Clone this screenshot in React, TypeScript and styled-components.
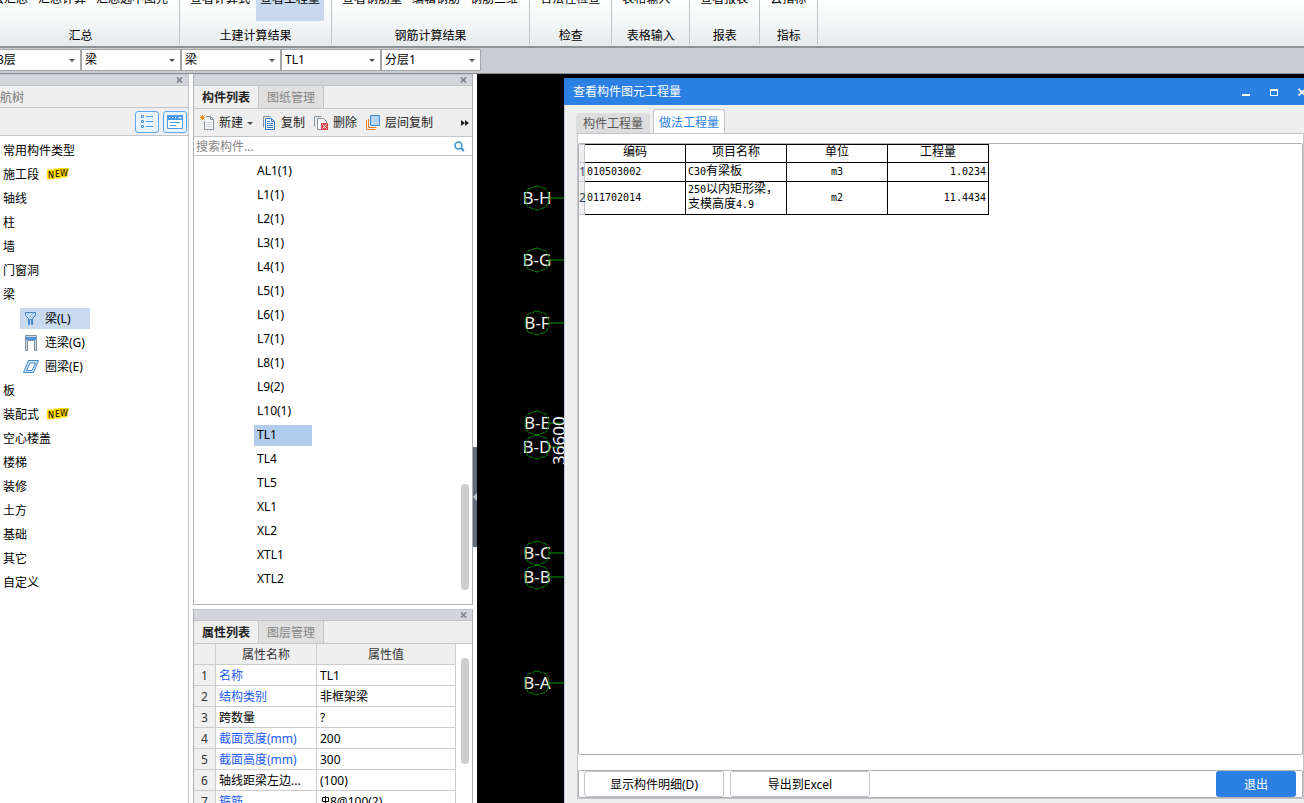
import React from "react";
import styled, { createGlobalStyle, css } from "styled-components";

const GlobalStyle = createGlobalStyle`
  *, *::before, *::after { box-sizing: border-box; }
  body {
    margin: 0;
    overflow: hidden;
    background: #fff;
    color: #000;
    font: 12px/16px "Noto Sans", "Noto Sans CJK SC", sans-serif;
  }
  button, input, select {
    margin: 0;
    padding: 0;
    border: 0;
    border-radius: 0;
    background: none;
    color: inherit;
    font: inherit;
  }
  svg { display: block; flex: none; }
`;

const Window = styled.div`
  display: flex;
  flex-direction: column;
  height: 100vh;
  overflow: hidden;
`;

/* Ribbon */

const Ribbon = styled.header`
  display: flex;
  flex: none;
  height: 48px;
  padding-bottom: 2px;
  overflow: hidden;
  background: linear-gradient(#fdfefe, #f4f7f7 50%, #e5eaea);
  border-bottom: 2px solid #8d9294;
`;

const RibbonGroup = styled.section<{ $clipped?: boolean }>`
  display: flex;
  flex: none;
  flex-direction: column;
  justify-content: flex-end;
  margin-left: ${(p) => (p.$clipped ? "-18px" : "0")};
  border-right: 1px solid #bfc3c5;
`;

const RibbonButtons = styled.div<{ $wide?: boolean }>`
  display: flex;
  flex: none;
  gap: 2px;
  padding: 0 ${(p) => (p.$wide ? "15px" : "7px")} 0 6px;
`;

const RibbonButton = styled.button<{ $active?: boolean }>`
  display: flex;
  align-items: flex-end;
  height: 80px;
  padding: 0 4px 14px;
  white-space: nowrap;
  background: ${(p) => (p.$active ? "#c8d8ef" : "transparent")};
`;

const RibbonLabel = styled.div`
  flex: none;
  padding-top: 7px;
  text-align: center;
`;

/* Filter bar */

const FilterBar = styled.div`
  display: flex;
  flex: none;
  height: 26px;
  padding: 1px 0 2px;
  background: #c9ccd1;
  border-bottom: 1px solid #8d9094;
`;

const FilterBox = styled.div<{ $clipped?: boolean }>`
  display: grid;
  flex: none;
  width: 100px;
  margin-left: ${(p) => (p.$clipped ? "-19px" : "0")};
  align-items: center;
  background: #fff;
  border: 1px solid #a6a6a8;

  > * { grid-area: 1 / 1; }
  > svg { justify-self: end; margin-right: 5px; pointer-events: none; }
`;

const FilterSelect = styled.select`
  width: 100%;
  height: 20px;
  padding-left: 3px;
  appearance: none;
  outline: none;
`;

/* Work area */

const Workspace = styled.main`
  display: flex;
  flex: 1;
  min-height: 0;
`;

const NavPanel = styled.aside`
  display: flex;
  flex: none;
  flex-direction: column;
  width: 189px;
  border-right: 1px solid #c1c3c9;
`;

const DockStrip = styled.div`
  display: flex;
  flex: none;
  align-items: center;
  justify-content: flex-end;
  height: 12px;
  padding-right: 5px;
  background: #d4d5db;
  border: solid #c1c4ca;
  border-width: 1px 0;
`;

const IconButton = styled.button`
  display: flex;
  align-items: center;
  justify-content: center;
`;

const NavTitle = styled.h2`
  flex: none;
  height: 22px;
  margin: 0 0 0 -12px;
  padding-top: 4px;
  font-size: 12px;
  font-weight: 400;
  color: #777;
  background: #efefef;
  border-bottom: 1px solid #c1c3c9;
`;

const NavTools = styled.div`
  display: flex;
  flex: none;
  justify-content: flex-end;
  gap: 4px;
  height: 28px;
  padding: 3px 1px 2px;
  background: #efefef;
  border-bottom: 1px solid #c1c3c9;
`;

const ViewToggle = styled(IconButton)`
  width: 24px;
  background: #e9f3fd;
  border: 1px solid #5ba6ef;
  border-radius: 3px;
`;

const NavTree = styled.ul`
  margin: 0;
  padding: 2px 0 0;
  list-style: none;
`;

const NavItem = styled.li<{ $child?: boolean }>`
  display: flex;
  align-items: center;
  height: 24px;
  padding-left: ${(p) => (p.$child ? "20px" : "3px")};
  gap: 7px;
`;

const NavNode = styled.button`
  padding-top: 2px;
`;

const NavLeaf = styled.button<{ $selected?: boolean }>`
  display: flex;
  align-items: center;
  gap: 6px;
  height: 21px;
  min-width: 70px;
  padding: 1px 4px 0 3px;
  background: ${(p) => (p.$selected ? "#c8d9f0" : "transparent")};
`;

const DockColumn = styled.div`
  display: flex;
  flex: none;
  flex-direction: column;
  gap: 4px;
  width: 280px;
  margin-left: 4px;
`;

const DockPanel = styled.section<{ $fixed?: boolean }>`
  display: flex;
  flex-direction: column;
  flex: ${(p) => (p.$fixed ? "0 0 194px" : "1 1 0")};
  min-height: 0;
  overflow: hidden;
  border: solid #adb0b4;
  border-width: ${(p) => (p.$fixed ? "0 1px" : "0 1px 1px")};
`;

const DockTabs = styled.div`
  display: flex;
  flex: none;
  height: 23px;
  background: #efefef;
  border-bottom: 1px solid #c1c4ca;
`;

const DockTab = styled.button<{ $active?: boolean }>`
  width: 65px;
  padding-top: 2px;
  border-right: 1px solid #c1c4ca;
  ${(p) =>
    p.$active
      ? css`
          color: #222;
          font-weight: 600;
          background: #efefef;
        `
      : css`
          color: #858585;
          background: #e0e0e0;
        `}
`;

const ListTools = styled.div`
  display: flex;
  flex: none;
  align-items: center;
  gap: 9px;
  height: 28px;
  padding: 1px 3px 0 6px;
  color: #222;
  background: #efefef;
  border-bottom: 1px solid #c1c4ca;
`;

const ToolButton = styled.button`
  display: flex;
  align-items: center;
  gap: 3px;
  white-space: nowrap;

  span + svg { margin-left: 1px; }
`;

const MoreButton = styled(IconButton)`
  margin-left: auto;
`;

const SearchRow = styled.label`
  display: flex;
  flex: none;
  align-items: center;
  height: 19px;
  padding: 0 7px 0 2px;
  border-bottom: 1px solid #c1c4ca;
`;

const SearchInput = styled.input`
  flex: 1;
  min-width: 0;
  padding-top: 1px;
  outline: none;
  &::placeholder { color: #858585; opacity: 1; }
`;

const ScrollArea = styled.div`
  display: flex;
  flex: 1;
  min-height: 0;
`;

const ComponentList = styled.ul`
  flex: 1;
  margin: 0;
  padding: 3px 0 0 60px;
  list-style: none;
`;

const ComponentItem = styled.li`
  display: flex;
  align-items: center;
  height: 24px;
`;

const ComponentButton = styled.button<{ $selected?: boolean }>`
  height: 21px;
  min-width: 58px;
  padding-left: 3px;
  text-align: left;
  background: ${(p) => (p.$selected ? "#b2cced" : "transparent")};
`;

const Gutter = styled.div<{ $end?: boolean }>`
  display: flex;
  flex: none;
  flex-direction: column;
  justify-content: ${(p) => (p.$end ? "flex-end" : "flex-start")};
  width: 14px;
  padding: 14px 3px;
`;

const Thumb = styled.div`
  height: 106px;
  background: #cdcdcd;
  border-radius: 4px;
`;

const PropertyWrap = styled.div`
  flex: 1;
  overflow: hidden;
`;

const PropertyTable = styled.table`
  width: 262px;
  table-layout: fixed;
  border-spacing: 0;

  th, td {
    height: 21px;
    padding: 2px 3px 0;
    overflow: hidden;
    font-weight: 400;
    text-align: left;
    white-space: nowrap;
    border-right: 1px solid #cccccf;
    border-bottom: 1px solid #cccccf;
  }
  thead th {
    color: #333;
    text-align: center;
    background: #efefef;
  }
`;

const RowNumber = styled.th`
  && {
    padding: 2px 0 0;
    color: #333;
    text-align: center;
    background: #efefef;
  }
`;

const PropertyName = styled.td<{ $editable?: boolean }>`
  color: ${(p) => (p.$editable ? "#1d5bf5" : "#000")};
`;

const SplitterColumn = styled.div`
  display: flex;
  flex: none;
  flex-direction: column;
  width: 4px;
  padding-top: 373px;
`;

const SplitterHandle = styled.button`
  display: flex;
  align-items: center;
  width: 4px;
  height: 100px;
  background: #5f6b79;
`;

/* Model view with the floating dialog */

const ModelView = styled.div`
  position: relative;
  display: flex;
  flex: 1;
  min-width: 0;
  padding: 4px 0 0 87px;
  overflow: hidden;
  background: #000;
`;

const AxisDrawing = styled.svg`
  position: absolute;
  top: 0;
  left: 0;
  width: 87px;
  height: 100%;
`;

const Dialog = styled.section`
  display: flex;
  flex: 1;
  flex-direction: column;
  min-width: 0;
  margin-right: -12px;
  background: #efefef;
`;

const DialogTitle = styled.div`
  display: flex;
  flex: none;
  align-items: center;
  gap: 20px;
  height: 27px;
  padding: 0 10px 0 9px;
  color: #fff;
  background: #2c80e2;
`;

const DialogName = styled.h1`
  flex: 1;
  margin: 0;
  padding-top: 1px;
  font-size: 12px;
  font-weight: 400;
`;

const DialogBody = styled.div`
  display: flex;
  flex: 1;
  flex-direction: column;
  min-height: 0;
  padding: 4px 12px 4px;
  border-left: 1px solid #c5cad8;
`;

const DialogTabs = styled.div`
  display: flex;
  flex: none;
  align-items: flex-end;
  gap: 3px;
  height: 25px;
  margin: 0 0 -1px -1px;
`;

const DialogTab = styled.button<{ $active?: boolean }>`
  ${(p) =>
    p.$active
      ? css`
          height: 25px;
          padding: 2px 5px 0;
          color: #2c80e2;
          background: #fff;
          border: 1px solid #c1c4ca;
          border-bottom: 0;
          border-radius: 3px 3px 0 0;
        `
      : css`
          height: 21px;
          padding: 2px 7px 0;
          color: #555;
          background: #dddddd;
          border-bottom: 1px solid #c1c4ca;
          border-radius: 3px 3px 0 0;
        `}
`;

const DialogPane = styled.div`
  display: flex;
  flex: 1;
  flex-direction: column;
  gap: 15px;
  min-height: 0;
  padding-top: 9px;
  background: #fff;
  border: 1px solid #c1c4ca;
`;

const ResultBox = styled.div`
  flex: 1;
  min-height: 0;
  overflow: hidden;
  border: 1px solid #b1b3b5;
  border-radius: 2px;
`;

const ResultTable = styled.table`
  width: 410px;
  table-layout: fixed;
  border-spacing: 0;
  line-height: 14px;

  th, td {
    height: 19px;
    padding: 0 2px 2px;
    font-weight: 400;
    border-right: 1px solid #000;
    border-bottom: 1px solid #000;
  }
  thead th {
    padding-bottom: 3px;
    border-top: 1px solid #000;
  }
  tbody tr:last-child > * { height: 33px; }
`;

const ResultNumber = styled.th`
  && {
    padding: 0;
    color: #33415c;
    background: #efefef;
    border-color: #c1c4ca;
  }
`;

const ResultCell = styled.td<{ $align?: "left" | "center" | "right" }>`
  text-align: ${(p) => p.$align ?? "left"};
`;

const Mono = styled.span`
  font-family: "DejaVu Sans Mono", "Liberation Mono", monospace;
  font-size: 10px;
`;

const DialogFooter = styled.footer`
  display: flex;
  flex: none;
  gap: 6px;
  height: 28px;
  padding: 0 6px 0 5px;
  border: 1px solid #b1b3b5;
  border-radius: 2px;
`;

const DialogButton = styled.button<{ $primary?: boolean }>`
  padding-top: 2px;
  ${(p) =>
    p.$primary
      ? css`
          width: 80px;
          margin-left: auto;
          color: #fff;
          background: #2c80e2;
          border-radius: 3px;
        `
      : css`
          width: 140px;
          background: #fff;
          border: 1px solid #c4c6ca;
          border-radius: 3px;
        `}
`;

/* Icons */

const Caret = () => (
  <svg width="6" height="3" viewBox="0 0 6 3" aria-hidden="true">
    <path d="M0 0h6L3 3z" fill="#555" />
  </svg>
);

const CloseMark = () => (
  <svg width="7" height="6" viewBox="0 0 7 6" aria-hidden="true">
    <path d="M1 0.5L6 5.5M6 0.5L1 5.5" stroke="#7c7e84" strokeWidth="1.6" />
  </svg>
);

const ListViewIcon = () => (
  <svg width="14" height="14" viewBox="0 0 14 14" fill="none" stroke="#4a9bea" aria-hidden="true">
    <path d="M1.5.5h2v2h-2zM1.5 5.5h2v2h-2zM1.5 10.5h2v2h-2z" />
    <path d="M6 1.500h7M6 6.500h7M6 11.500h7" />
  </svg>
);

const CardViewIcon = () => (
  <svg width="16" height="14" viewBox="0 0 16 14" aria-hidden="true">
    <path d="M.5.5h15v13H.5z" fill="#fff" stroke="#4a9bea" />
    <path d="M0 0h16v5H0z" fill="#4a9bea" />
    <path d="M2 2h1v1H2zM5 2h1v1H5zM8 2h1v1H8zM11 2h4l-2 2z" fill="#fff" />
    <path d="M3 7.500h10M3 10.500h6" stroke="#4a9bea" />
  </svg>
);

const NewBadge = () => (
  <svg width="24" height="12" viewBox="0 0 24 12" role="img" aria-label="NEW">
    <g
      fontFamily="DejaVu Sans"
      fontSize="8"
      fill="#000"
      stroke="#ffd900"
      strokeWidth="3"
      paintOrder="stroke"
    >
      <text x="2" y="10">N</text>
      <text x="9" y="9">E</text>
      <text x="14" y="8">W</text>
    </g>
  </svg>
);

const BeamIcon = () => (
  <svg width="16" height="16" viewBox="0 0 16 16" aria-hidden="true">
    <path d="M2.500 1.500h10v3l-3 3v6h-1v-5h-2v5h-1v-6l-3-3z" fill="#d3e6fa" stroke="#3f86cf" />
    <path d="M4 4l3-2M6 6l5-4M8 7l4-3" stroke="#7fb0e4" />
  </svg>
);

const LinkBeamIcon = () => (
  <svg width="16" height="16" viewBox="0 0 16 16" aria-hidden="true">
    <path d="M2.500.5h11v15h-2v-10h-7v10h-2z" fill="#d0d6dc" stroke="#84919c" />
    <path d="M3 2h10v3H3z" fill="#4f97e6" />
  </svg>
);

const RingBeamIcon = () => (
  <svg width="16" height="16" viewBox="0 0 16 16" aria-hidden="true">
    <path
      d="M5.500 1.500h10l-5 12H.5zM7 4L3.500 11.500H9L12.500 4z"
      fill="#cfe3f9"
      fillRule="evenodd"
      stroke="#3f86cf"
    />
  </svg>
);

const NewIcon = () => (
  <svg width="16" height="16" viewBox="0 0 16 16" aria-hidden="true">
    <path d="M4.500 1.500h6l3 3v10h-9z" fill="#f7f8f9" stroke="#84919c" />
    <path d="M10.500 1.500v3h3" fill="none" stroke="#84919c" />
    <path d="M6 7.500h6M6 9.500h6M6 11.500h6" stroke="#d4d2dc" />
    <path d="M0 0h6v6H0z" fill="#efefef" />
    <path d="M.5.5l4 4M4.500.5l-4 4M2.500 0v5M0 2.500h5" stroke="#f09022" />
  </svg>
);

const CopyIcon = () => (
  <svg width="16" height="16" viewBox="0 0 16 16" fill="none" aria-hidden="true">
    <path d="M1.500 12.500v-11h7" stroke="#84919c" />
    <path d="M3.500 3.500h6l3 3v8h-9z" fill="#fff" stroke="#2f7cd0" />
    <path d="M9.500 3.500v3h3M5 6.500h3M5 8.500h6M5 10.500h6M5 12.500h6" stroke="#2f7cd0" />
  </svg>
);

const DeleteIcon = () => (
  <svg width="16" height="16" viewBox="0 0 16 16" fill="none" aria-hidden="true">
    <path d="M.5 11.500v-10h7" stroke="#84919c" />
    <path d="M3.500 3.500h6l3 3v8h-9z" fill="#fff" stroke="#84919c" />
    <path d="M7 8h7v7H7z" fill="#d9484c" />
    <path d="M8.500 9.500l4 4M12.500 9.500l-4 4" stroke="#fff" />
  </svg>
);

const LayerCopyIcon = () => (
  <svg width="16" height="16" viewBox="0 0 16 16" fill="none" aria-hidden="true">
    <path d="M.5 5v9.500h9M2.500 4v8.500h8" stroke="#f0812c" />
    <path d="M4.500.5h9v10h-9z" fill="#b5d6fb" stroke="#3f8ddd" />
  </svg>
);

const MoreIcon = () => (
  <svg width="8" height="6" viewBox="0 0 8 6" aria-hidden="true">
    <path d="M0 0l4 3-4 3zM4 0l4 3-4 3z" fill="#222" />
  </svg>
);

const SearchIcon = () => (
  <svg width="11" height="11" viewBox="0 0 11 11" fill="none" stroke="#3592cf" aria-hidden="true">
    <circle cx="4.500" cy="4.500" r="3.500" strokeWidth="1.500" />
    <path d="M7 7l3 3" strokeWidth="2" />
  </svg>
);

const MinimizeIcon = () => (
  <svg width="8" height="8" viewBox="0 0 8 8" aria-hidden="true">
    <path d="M0 6h8v2H0z" fill="#fff" />
  </svg>
);

const MaximizeIcon = () => (
  <svg width="8" height="8" viewBox="0 0 8 8" aria-hidden="true">
    <path d="M0 1h8v7H0zM1 3v4h6V3z" fill="#fff" fillRule="evenodd" />
  </svg>
);

const DialogCloseIcon = () => (
  <svg width="8" height="8" viewBox="0 0 8 8" aria-hidden="true">
    <path d="M.5 1l7 6.500M7.500 1l-7 6.500" stroke="#fff" strokeWidth="1.800" />
  </svg>
);

/* Data */

const ribbonGroups = [
  { label: "汇总", items: ["云汇总", "汇总计算", "汇总选中图元"] },
  { label: "土建计算结果", items: ["查看计算式", "查看工程量"], active: "查看工程量" },
  { label: "钢筋计算结果", items: ["查看钢筋量", "编辑钢筋", "钢筋三维"] },
  { label: "检查", items: ["合法性检查"] },
  { label: "表格输入", items: ["表格输入"], wide: true },
  { label: "报表", items: ["查看报表"] },
  { label: "指标", items: ["云指标"] },
];

const filters = [
  { name: "楼层", value: "第3层" },
  { name: "构件大类", value: "梁" },
  { name: "构件类型", value: "梁" },
  { name: "构件", value: "TL1" },
  { name: "分层", value: "分层1" },
];

type NavEntry = { name: string; isNew?: boolean; icon?: React.ReactNode; selected?: boolean };

const navEntries: NavEntry[] = [
  { name: "常用构件类型" },
  { name: "施工段", isNew: true },
  { name: "轴线" },
  { name: "柱" },
  { name: "墙" },
  { name: "门窗洞" },
  { name: "梁" },
  { name: "梁(L)", icon: <BeamIcon />, selected: true },
  { name: "连梁(G)", icon: <LinkBeamIcon /> },
  { name: "圈梁(E)", icon: <RingBeamIcon /> },
  { name: "板" },
  { name: "装配式", isNew: true },
  { name: "空心楼盖" },
  { name: "楼梯" },
  { name: "装修" },
  { name: "土方" },
  { name: "基础" },
  { name: "其它" },
  { name: "自定义" },
];

const components = [
  "AL1(1)", "L1(1)", "L2(1)", "L3(1)", "L4(1)", "L5(1)", "L6(1)", "L7(1)", "L8(1)",
  "L9(2)", "L10(1)", "TL1", "TL4", "TL5", "XL1", "XL2", "XTL1", "XTL2",
];

const properties = [
  { name: "名称", value: "TL1", editable: true },
  { name: "结构类别", value: "非框架梁", editable: true },
  { name: "跨数量", value: "?" },
  { name: "截面宽度(mm)", value: "200", editable: true },
  { name: "截面高度(mm)", value: "300", editable: true },
  { name: "轴线距梁左边...", value: "(100)" },
  { name: "箍筋", value: "8@100(2)", editable: true, rebar: true },
];

const results = [
  { code: "010503002", item: ["C30有梁板"], unit: "m3", amount: "1.0234" },
  { code: "011702014", item: ["250以内矩形梁，", "支模高度4.9"], unit: "m2", amount: "11.4434" },
];

const axes = [
  { name: "B-H", y: 124 },
  { name: "B-G", y: 186 },
  { name: "B-F", y: 249 },
  { name: "B-E", y: 349 },
  { name: "B-D", y: 373 },
  { name: "B-C", y: 479 },
  { name: "B-B", y: 503 },
  { name: "B-A", y: 609 },
];

/* Latin letters and digits of a mixed line are set in the narrow monospace face. */
const MixedText = ({ text }: { text: string }) => (
  <div>
    {text
      .split(/([\x20-\x7e]+)/)
      .filter(Boolean)
      .map((part, i) => (/^[\x20-\x7e]/.test(part) ? <Mono key={i}>{part}</Mono> : part))}
  </div>
);

const RebarMark = styled.span`
  display: inline-flex;
  vertical-align: -1px;
`;

const RebarIcon = () => (
  <RebarMark>
    <svg width="10" height="12" viewBox="0 0 10 12" fill="none" stroke="#000" aria-hidden="true">
      <path d="M2.500 2.500h6v4h-6zM5.500 1v10M1 8.500h9" />
    </svg>
  </RebarMark>
);

const AxisBubble = ({ name, y }: { name: string; y: number }) => (
  <g transform={`translate(60 ${y})`}>
    <path d="M12 0h16" stroke="#006a00" strokeWidth="1.500" />
    <text y="6" textAnchor="middle" fill="#f4f4f4" fontSize="17">
      {name}
    </text>
    <path
      d="M0-12L9-9 12-3V3L9 9 0 12-9 9-12 3V-3L-9-9z"
      fill="none"
      stroke="#008400"
      strokeDasharray="5 1"
    />
  </g>
);

const Dock = ({ label }: { label: string }) => (
  <DockStrip>
    <IconButton aria-label={label}>
      <CloseMark />
    </IconButton>
  </DockStrip>
);

export default function App() {
  return (
    <Window>
      <GlobalStyle />
      <Ribbon>
        {ribbonGroups.map((group, i) => (
          <RibbonGroup key={group.label} $clipped={i === 0}>
            <RibbonButtons $wide={group.wide}>
              {group.items.map((item) => (
                <RibbonButton key={item} $active={item === group.active}>
                  {item}
                </RibbonButton>
              ))}
            </RibbonButtons>
            <RibbonLabel>{group.label}</RibbonLabel>
          </RibbonGroup>
        ))}
      </Ribbon>

      <FilterBar>
        {filters.map((filter, i) => (
          <FilterBox key={filter.name} $clipped={i === 0}>
            <FilterSelect aria-label={filter.name} defaultValue={filter.value}>
              <option>{filter.value}</option>
            </FilterSelect>
            <Caret />
          </FilterBox>
        ))}
      </FilterBar>

      <Workspace>
        <NavPanel>
          <Dock label="关闭导航树" />
          <NavTitle>导航树</NavTitle>
          <NavTools>
            <ViewToggle aria-label="列表视图">
              <ListViewIcon />
            </ViewToggle>
            <ViewToggle aria-label="卡片视图">
              <CardViewIcon />
            </ViewToggle>
          </NavTools>
          <NavTree>
            {navEntries.map((entry) => (
              <NavItem key={entry.name} $child={!!entry.icon}>
                {entry.icon ? (
                  <NavLeaf $selected={entry.selected}>
                    {entry.icon}
                    {entry.name}
                  </NavLeaf>
                ) : (
                  <NavNode>{entry.name}</NavNode>
                )}
                {entry.isNew && <NewBadge />}
              </NavItem>
            ))}
          </NavTree>
        </NavPanel>

        <DockColumn>
          <DockPanel>
            <Dock label="关闭构件列表" />
            <DockTabs>
              <DockTab $active>构件列表</DockTab>
              <DockTab>图纸管理</DockTab>
            </DockTabs>
            <ListTools>
              <ToolButton>
                <NewIcon />
                <span>新建</span>
                <Caret />
              </ToolButton>
              <ToolButton>
                <CopyIcon />
                复制
              </ToolButton>
              <ToolButton>
                <DeleteIcon />
                删除
              </ToolButton>
              <ToolButton>
                <LayerCopyIcon />
                层间复制
              </ToolButton>
              <MoreButton aria-label="更多">
                <MoreIcon />
              </MoreButton>
            </ListTools>
            <SearchRow>
              <SearchInput type="text" aria-label="搜索构件" placeholder="搜索构件..." />
              <SearchIcon />
            </SearchRow>
            <ScrollArea>
              <ComponentList>
                {components.map((name) => (
                  <ComponentItem key={name}>
                    <ComponentButton $selected={name === "TL1"}>{name}</ComponentButton>
                  </ComponentItem>
                ))}
              </ComponentList>
              <Gutter $end>
                <Thumb />
              </Gutter>
            </ScrollArea>
          </DockPanel>

          <DockPanel $fixed>
            <Dock label="关闭属性列表" />
            <DockTabs>
              <DockTab $active>属性列表</DockTab>
              <DockTab>图层管理</DockTab>
            </DockTabs>
            <ScrollArea>
              <PropertyWrap>
                <PropertyTable>
                  <colgroup>
                    <col style={{ width: 22 }} />
                    <col style={{ width: 101 }} />
                    <col />
                  </colgroup>
                  <thead>
                    <tr>
                      <th aria-label="序号" />
                      <th>属性名称</th>
                      <th>属性值</th>
                    </tr>
                  </thead>
                  <tbody>
                    {properties.map((property, i) => (
                      <tr key={property.name}>
                        <RowNumber>{i + 1}</RowNumber>
                        <PropertyName $editable={property.editable}>{property.name}</PropertyName>
                        <td>
                          {property.rebar && <RebarIcon />}
                          {property.value}
                        </td>
                      </tr>
                    ))}
                  </tbody>
                </PropertyTable>
              </PropertyWrap>
              <Gutter>
                <Thumb />
              </Gutter>
            </ScrollArea>
          </DockPanel>
        </DockColumn>

        <SplitterColumn>
          <SplitterHandle aria-label="收起面板">
            <svg width="4" height="8" viewBox="0 0 4 8" aria-hidden="true">
              <path d="M4 0v8L0 4z" fill="#c3c8ce" />
            </svg>
          </SplitterHandle>
        </SplitterColumn>

        <ModelView>
          <AxisDrawing>
            {axes.map((axis) => (
              <AxisBubble key={axis.name} {...axis} />
            ))}
            <text transform="translate(88 391) rotate(-90)" fill="#f4f4f4" fontSize="17">
              36600
            </text>
          </AxisDrawing>

          <Dialog role="dialog" aria-labelledby="dialog-name">
            <DialogTitle>
              <DialogName id="dialog-name">查看构件图元工程量</DialogName>
              <IconButton aria-label="最小化">
                <MinimizeIcon />
              </IconButton>
              <IconButton aria-label="最大化">
                <MaximizeIcon />
              </IconButton>
              <IconButton aria-label="关闭">
                <DialogCloseIcon />
              </IconButton>
            </DialogTitle>
            <DialogBody>
              <DialogTabs>
                <DialogTab>构件工程量</DialogTab>
                <DialogTab $active>做法工程量</DialogTab>
              </DialogTabs>
              <DialogPane>
                <ResultBox>
                  <ResultTable>
                    <colgroup>
                      <col style={{ width: 6 }} />
                      <col />
                      <col />
                      <col />
                      <col />
                    </colgroup>
                    <thead>
                      <tr>
                        <ResultNumber aria-label="序号" />
                        <th>编码</th>
                        <th>项目名称</th>
                        <th>单位</th>
                        <th>工程量</th>
                      </tr>
                    </thead>
                    <tbody>
                      {results.map((row, i) => (
                        <tr key={row.code}>
                          <ResultNumber>{i + 1}</ResultNumber>
                          <ResultCell>
                            <Mono>{row.code}</Mono>
                          </ResultCell>
                          <ResultCell>
                            {row.item.map((line) => (
                              <MixedText key={line} text={line} />
                            ))}
                          </ResultCell>
                          <ResultCell $align="center">
                            <Mono>{row.unit}</Mono>
                          </ResultCell>
                          <ResultCell $align="right">
                            <Mono>{row.amount}</Mono>
                          </ResultCell>
                        </tr>
                      ))}
                    </tbody>
                  </ResultTable>
                </ResultBox>
                <DialogFooter>
                  <DialogButton>显示构件明细(D)</DialogButton>
                  <DialogButton>导出到Excel</DialogButton>
                  <DialogButton $primary>退出</DialogButton>
                </DialogFooter>
              </DialogPane>
            </DialogBody>
          </Dialog>
        </ModelView>
      </Workspace>
    </Window>
  );
}
